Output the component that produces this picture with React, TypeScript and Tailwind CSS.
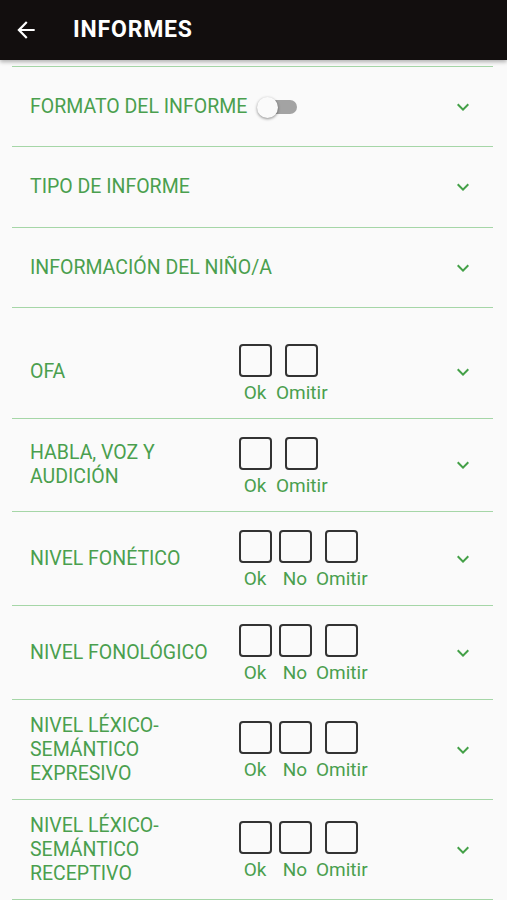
import React from "react";

type Row = {
  lines: string[];
  options?: string[];
  h: string;
  extra?: string;
};

const rows: Row[] = [
  { lines: ["FORMATO DEL INFORME"], h: "h-[80px]" },
  { lines: ["TIPO DE INFORME"], h: "h-[81px]" },
  { lines: ["INFORMACIÓN DEL NIÑO/A"], h: "h-[80px]" },
  { lines: ["OFA"], options: ["Ok", "Omitir"], h: "h-[111px]", extra: "pt-[18px]" },
  { lines: ["HABLA, VOZ Y", "AUDICIÓN"], options: ["Ok", "Omitir"], h: "h-[93px]" },
  { lines: ["NIVEL FONÉTICO"], options: ["Ok", "No", "Omitir"], h: "h-[94px]" },
  { lines: ["NIVEL FONOLÓGICO"], options: ["Ok", "No", "Omitir"], h: "h-[94px]" },
  {
    lines: ["NIVEL LÉXICO-", "SEMÁNTICO", "EXPRESIVO"],
    options: ["Ok", "No", "Omitir"],
    h: "h-[100px]",
  },
  {
    lines: ["NIVEL LÉXICO-", "SEMÁNTICO", "RECEPTIVO"],
    options: ["Ok", "No", "Omitir"],
    h: "h-[100px]",
  },
];

const Chevron = () => (
  <svg width="24" height="24" viewBox="0 0 24 24" className="shrink-0">
    <path d="M16.59 8.59L12 13.17 7.41 8.59 6 10l6 6 6-6z" fill="#43a047" />
  </svg>
);

const Toggle = () => (
  <div className="relative ml-[10px] w-[41px] h-[22px] flex items-center">
    <div className="ml-[4px] w-[36px] h-[14px] rounded-full bg-[#a3a3a3]" />
    <div className="absolute left-0 top-px w-[21px] h-[21px] rounded-full bg-[#fafafa] shadow-[0_1px_3px_rgba(0,0,0,0.45)]" />
  </div>
);

const Option = ({ label }: { label: string }) => (
  <div className="flex flex-col items-center min-w-[40px]">
    <div className="w-[33px] h-[33px] border-2 border-[#333] rounded-[4px]" />
    <span className="mt-[4px] px-px text-[19px] leading-[24px] text-[#4a9f4e]">
      {label}
    </span>
  </div>
);

export default function App() {
  return (
    <div className="min-h-[900px] bg-[#fafafa] font-['Roboto',sans-serif]">
      <header className="relative z-10 h-[60px] bg-[#120e0e] flex items-center shadow-[0_2px_4px_rgba(0,0,0,0.3)]">
        <svg width="26" height="26" viewBox="0 0 24 24" className="ml-[13px]">
          <path
            d="M20 11H7.83l5.59-5.59L12 4l-8 8 8 8 1.41-1.41L7.83 13H20v-2z"
            fill="#fff"
          />
        </svg>
        <h1 className="ml-[34px] text-white text-[23px] font-bold tracking-[0.8px]">
          INFORMES
        </h1>
      </header>

      <div className="ml-3 mr-[14px] mt-[6px] border-t border-[#a5d6a7]">
        {rows.map((row, i) => (
          <div
            key={i}
            className={`${row.h} ${row.extra ?? ""} flex items-center border-b border-[#a5d6a7] pl-[18px] pr-[18px] text-[#4a9f4e]`}
          >
            {row.options ? (
              <>
                <div className="w-[205px] shrink-0 text-[19.5px] leading-[24px]">
                  {row.lines.map((l) => (
                    <div key={l}>{l}</div>
                  ))}
                </div>
                <div className="flex mt-[4px]">
                  {row.options.map((o) => (
                    <Option key={o} label={o} />
                  ))}
                </div>
              </>
            ) : (
              <div className="flex items-center text-[19.5px] leading-[24px]">
                {row.lines[0]}
                {i === 0 && <Toggle />}
              </div>
            )}
            <div className="flex-1" />
            <Chevron />
          </div>
        ))}
      </div>
    </div>
  );
}
